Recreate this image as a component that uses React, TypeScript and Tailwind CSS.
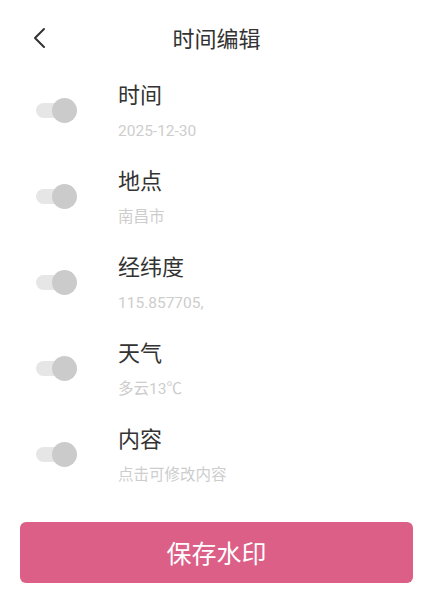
const font = { fontFamily: '"Noto Sans CJK SC", "Noto Sans", sans-serif' };
const subFont = { fontFamily: 'Roboto, "Noto Sans CJK SC", sans-serif' };

const rows = [
  { label: "时间", value: "2025-12-30" },
  { label: "地点", value: "南昌市" },
  { label: "经纬度", value: "115.857705," },
  { label: "天气", value: "多云13℃" },
  { label: "内容", value: "点击可修改内容" },
];

function Toggle() {
  return (
    <div className="relative h-[25px] w-[41px] shrink-0">
      <div className="absolute left-0 top-[5px] h-[15px] w-[36px] rounded-full bg-[#e6e6e6]" />
      <div className="absolute left-[16px] top-0 h-[25px] w-[25px] rounded-full bg-[#cbcbcb]" />
    </div>
  );
}

export default function App() {
  return (
    <div className="h-[611px] w-[443px] bg-white pr-[10px]" style={font}>
      <div className="relative flex h-[74px] items-center justify-center">
        <button type="button" className="absolute left-[31px] top-[27px]">
          <svg width="16" height="22" viewBox="0 0 16 22" fill="none">
            <path d="M13 2 L4 11 L13 20" stroke="#333" strokeWidth="2" strokeLinecap="round" strokeLinejoin="round" />
          </svg>
        </button>
        <h1 className="text-[22px] leading-[30px] text-[#333]">时间编辑</h1>
      </div>

      <div className="pt-[4px]">
        {rows.map((row) => (
          <div key={row.label} className="flex h-[86px] items-start pl-[36px]">
            <div className="mt-[2px] flex h-[61px] items-center">
              <Toggle />
            </div>
            <div className="ml-[41px]">
              <p className="text-[22px] leading-[30px] text-[#333]">{row.label}</p>
              <p className="mt-[13px] text-[15.5px] leading-[20px] text-[#cdcdcd]" style={subFont}>
                {row.value}
              </p>
            </div>
          </div>
        ))}
      </div>

      <div className="pl-[20px] pr-[20px] pt-[14px]">
        <button
          type="button"
          className="flex h-[61px] w-full items-center justify-center rounded-[6px] bg-[#dc5f87] text-[25px] text-white"
        >
          保存水印
        </button>
      </div>
    </div>
  );
}
